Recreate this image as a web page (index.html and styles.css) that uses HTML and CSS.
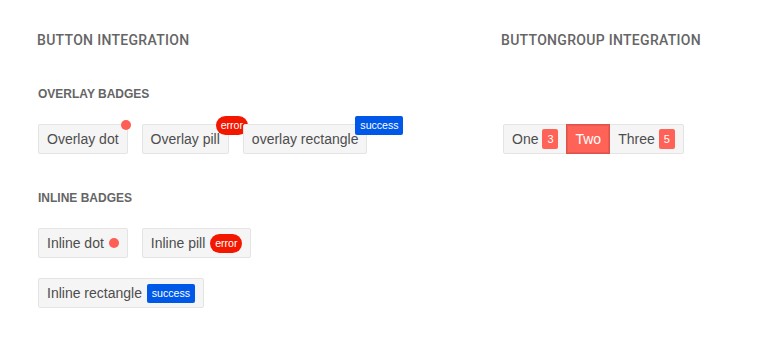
FILE: index.html
```html
<!DOCTYPE html>
<html lang="en">
<head>
    <meta charset="UTF-8">
    <meta name="viewport" content="width=device-width, initial-scale=1.0">
    <title>Badge integration</title>
    <link rel="stylesheet" href="styles.css">
</head>
<body>
    <div class="demo">
        <section class="column column-buttons">
            <h2 class="section-title">Button integration</h2>

            <h3 class="sub-title">Overlay badges</h3>
            <div class="button-row">
                <button type="button" class="btn">Overlay dot<span class="badge badge-dot badge-overlay overlay-dot"></span></button>
                <button type="button" class="btn">Overlay pill<span class="badge badge-pill badge-overlay overlay-pill">error</span></button>
                <button type="button" class="btn">overlay rectangle<span class="badge badge-rect badge-overlay overlay-rect">success</span></button>
            </div>

            <h3 class="sub-title">Inline badges</h3>
            <div class="button-row">
                <button type="button" class="btn">Inline dot<span class="badge badge-dot badge-inline"></span></button>
                <button type="button" class="btn">Inline pill<span class="badge badge-pill badge-inline">error</span></button>
            </div>
            <div class="button-row row-spaced">
                <button type="button" class="btn">Inline rectangle<span class="badge badge-rect badge-inline">success</span></button>
            </div>
        </section>

        <section class="column column-group">
            <h2 class="section-title">ButtonGroup integration</h2>

            <div class="button-group">
                <button type="button" class="btn">One<span class="badge badge-count">3</span></button>
                <button type="button" class="btn btn-selected">Two</button>
                <button type="button" class="btn">Three<span class="badge badge-count">5</span></button>
            </div>
        </section>
    </div>
</body>
</html>
```

FILE: styles.css
```css
body {
    margin: 0;
    padding: 0;
    background-color: #fff;
    font-family: "Liberation Sans", Arial, sans-serif;
    color: #4a4a4a;
}
.demo {
    display: flex;
    padding: 30px 0 0 38px;
}
.column-buttons {
    width: 464px;
}
.section-title {
    margin: 0 0 0 -1px;
    font-family: Roboto, "Liberation Sans", sans-serif;
    font-weight: 500;
    font-size: 14px;
    line-height: 20px;
    letter-spacing: 0.3px;
    text-transform: uppercase;
    color: #656565;
}
.sub-title {
    margin: 36px 0 22px;
    font-family: "Liberation Sans", Arial, sans-serif;
    font-size: 12px;
    line-height: 16px;
    font-weight: bold;
    text-transform: uppercase;
    color: #656565;
}
.button-row {
    display: flex;
    gap: 14px;
}
.row-spaced {
    margin-top: 20px;
}
.btn {
    position: relative;
    display: inline-flex;
    align-items: center;
    padding: 4px 8px;
    border: 1px solid #e4e4e4;
    border-radius: 2px;
    background-color: #f5f5f5;
    color: #4d4d4d;
    font-family: "Liberation Sans", Arial, sans-serif;
    font-size: 14px;
    line-height: 20px;
    cursor: pointer;
}

/* badges */
.badge {
    display: inline-block;
    box-sizing: border-box;
    color: #fff;
    font-family: "Liberation Sans", Arial, sans-serif;
    font-size: 10.6px;
    text-align: center;
    white-space: nowrap;
}
.badge-dot {
    width: 10px;
    height: 10px;
    border-radius: 50%;
    background-color: #fd5f55;
}
.badge-pill {
    width: 32px;
    height: 19px;
    line-height: 18px;
    border-radius: 10px;
    background-color: #f31700;
}
.badge-rect {
    width: 48px;
    height: 19px;
    line-height: 18px;
    border-radius: 2px;
    background-color: #0058e9;
}
.badge-inline {
    margin-left: 5px;
}
.badge-overlay {
    position: absolute;
}
.overlay-dot {
    top: -5px;
    right: -4px;
}
.overlay-pill {
    top: -9px;
    right: -20px;
}
.overlay-rect {
    top: -9px;
    right: -37px;
}

/* button group */
.button-group {
    display: flex;
    margin: 74px 0 0 1px;
}
.button-group .btn {
    border-radius: 0;
}
.button-group .btn + .btn {
    margin-left: -1px;
}
.button-group .btn:first-child {
    border-radius: 2px 0 0 2px;
}
.button-group .btn:last-child {
    border-radius: 0 2px 2px 0;
}
.btn-selected {
    z-index: 1;
    background-color: #ff6358;
    border-color: #dd5249;
    box-shadow: inset 0 0 0 1px #e95a50;
    color: #fff;
}
.badge-count {
    width: 16px;
    height: 20px;
    line-height: 20px;
    margin-left: 4px;
    border-radius: 2px;
    background-color: #ff6358;
    font-size: 11px;
}
```
